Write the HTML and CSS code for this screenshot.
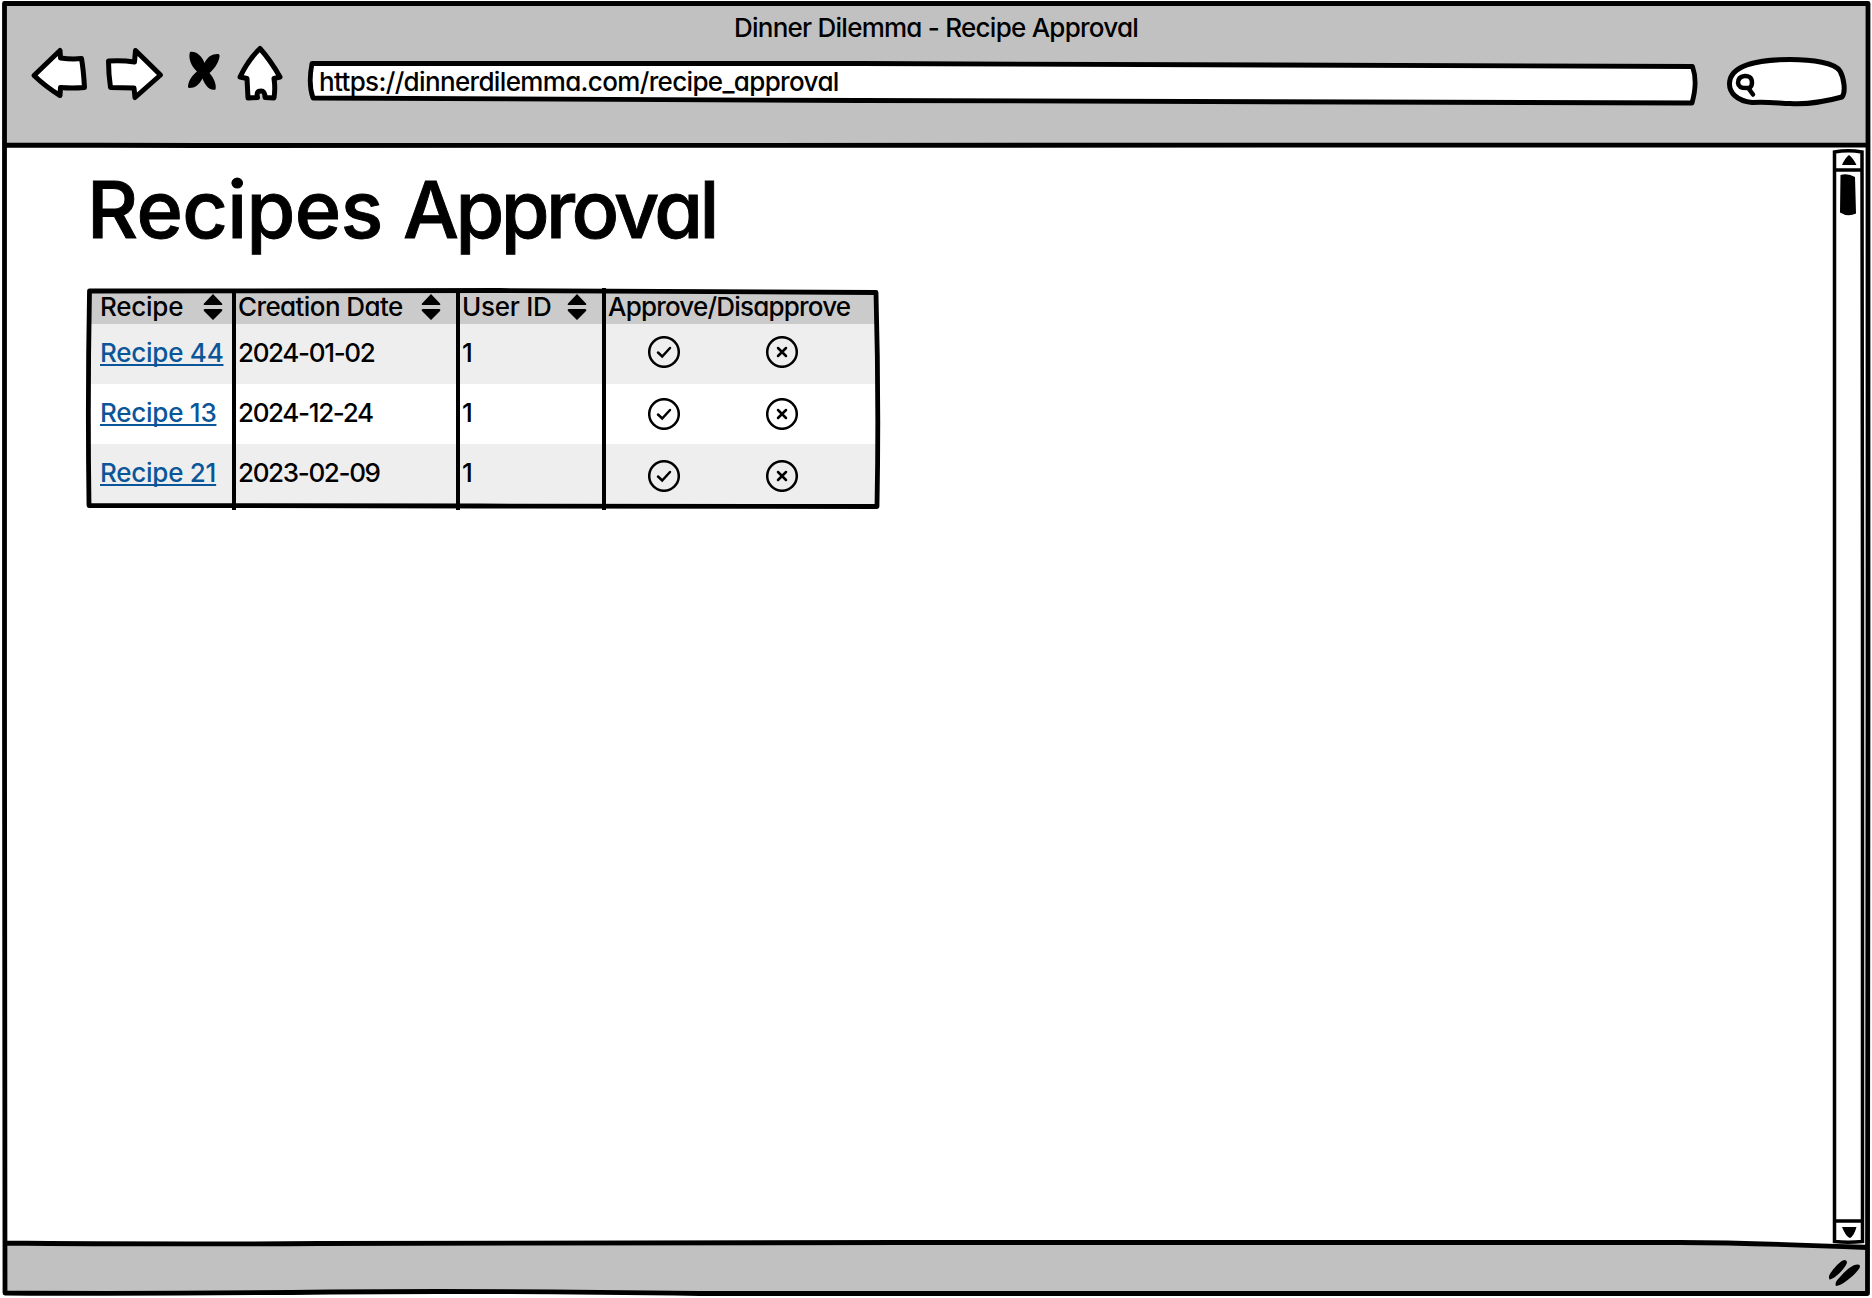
FILE: index.html
```html
<!DOCTYPE html>
<html lang="en">
<head>
<meta charset="utf-8">
<title>Dinner Dilemma - Recipe Approval</title>
<link rel="stylesheet" href="styles.css">
</head>
<body>
<div class="window">
  <header class="chrome">
    <div class="window-title">Dinner Dilemma - Recipe Approval</div>
    <div class="toolbar">
      <svg class="nav-icon" viewBox="30 44 60 58" width="60" height="58"><path d="M34 75.500L60 50.500L60.500 58Q72 59.500 81.500 58.500Q83.500 70 84.500 87.500Q72 88.500 60.500 87.500L60 95.500Q46 87 34 75.500Z"/></svg>
      <svg class="nav-icon nav-forward" viewBox="102 44 64 58" width="64" height="58"><path d="M108.500 61Q122 60 134.500 62L135.500 50.500L160.500 75L135 97.500L134 88L110.500 87.500Q108.500 74 108.500 61Z"/></svg>
      <svg class="nav-icon nav-stop" viewBox="184 44 40 58" width="40" height="58"><path class="solid" d="M190 52C196 51 202 56 204.500 63C208 56 213 53.500 218.500 54Q220 54.500 219.500 57C218 64 214 69 209.500 73C213 77 217 84 215.500 89.500C209 91 205 85 202.500 78.500C199 85 195 88 189.500 88Q187.500 88 188 86C189 79 193 75 197 71.500C191 66 188 58 190 52Z"/></svg>
      <svg class="nav-icon nav-home" viewBox="234 44 52 58" width="52" height="58"><path d="M260 48.500Q271 61 280 77L274 78.500Q275.500 88 274 98L265 97.500Q265 90.500 260.500 91Q256 91 257.500 97.500L248 98L247 78.500L240 77Q248 60 260 48.500Z"/></svg>
      <div class="address">
        <svg class="outline" viewBox="304 58 1396 50" preserveAspectRatio="none"><path d="M312 63.500L860 63.500L1692.500 66.500Q1698 82 1692 103L860 100.500L313 98Q308 84 312 63.500Z"/></svg>
        <span>https://dinnerdilemma.com/recipe_approval</span>
      </div>
      <svg class="search" viewBox="1724 54 126 56" width="126" height="56"><path d="M1752 102.500C1736 101 1729.500 92 1729.500 84C1729.500 66 1756 59.500 1790 59.500C1813 59.500 1835 63 1840 71C1844 78 1846 92 1842 97C1820 103 1805 104.500 1790 103.500C1777 103 1765 101.500 1752 102.500Z"/><path class="glass" d="M1752 82.500C1752 77 1748 75.500 1744.500 76C1740 76.500 1738 79.500 1738 83C1738.500 87.500 1742 88.500 1749 88Q1752 87 1752 82.500M1749 89L1753 94.500"/></svg>
    </div>
  </header>

  <div class="viewport">
    <main class="page">
      <h1>Recipes <span>Approval</span></h1>
      <div class="table-wrap">
        <table>
          <thead>
            <tr>
              <th><div class="head">Recipe<svg class="sort" viewBox="0 0 20 28"><path d="M10 1L19 10.500Q20 12 18 12H2Q0 12 1 10.500ZM10 27L19 18Q20 16 18 16H2Q0 16 1 18Z"/></svg></div></th>
              <th><div class="head head-date">Creation Date<svg class="sort" viewBox="0 0 20 28"><path d="M10 1L19 10.500Q20 12 18 12H2Q0 12 1 10.500ZM10 27L19 18Q20 16 18 16H2Q0 16 1 18Z"/></svg></div></th>
              <th><div class="head">User ID<svg class="sort" viewBox="0 0 20 28"><path d="M10 1L19 10.500Q20 12 18 12H2Q0 12 1 10.500ZM10 27L19 18Q20 16 18 16H2Q0 16 1 18Z"/></svg></div></th>
              <th><div class="head head-approve">Approve/Disapprove</div></th>
            </tr>
          </thead>
          <tbody>
            <tr>
              <td><a href="#">Recipe 44</a></td><td class="date">2024-01-02</td><td>1</td>
              <td><div class="actions actions-first"><svg viewBox="0 0 32 32"><circle cx="16" cy="16" r="14.800"/><path d="M10 16.500L14.200 20.500L22 12"/></svg><svg viewBox="0 0 32 32"><circle cx="16" cy="16" r="14.800"/><path d="M12 12L20 20M20 12L12 20"/></svg></div></td>
            </tr>
            <tr>
              <td><a href="#">Recipe 13</a></td><td class="date">2024-12-24</td><td>1</td>
              <td><div class="actions"><svg viewBox="0 0 32 32"><circle cx="16" cy="16" r="14.800"/><path d="M10 16.500L14.200 20.500L22 12"/></svg><svg viewBox="0 0 32 32"><circle cx="16" cy="16" r="14.800"/><path d="M12 12L20 20M20 12L12 20"/></svg></div></td>
            </tr>
            <tr>
              <td><a href="#">Recipe 21</a></td><td class="date">2023-02-09</td><td>1</td>
              <td><div class="actions actions-last"><svg viewBox="0 0 32 32"><circle cx="16" cy="16" r="14.800"/><path d="M10 16.500L14.200 20.500L22 12"/></svg><svg viewBox="0 0 32 32"><circle cx="16" cy="16" r="14.800"/><path d="M12 12L20 20M20 12L12 20"/></svg></div></td>
            </tr>
          </tbody>
        </table>
        <svg class="outline" viewBox="84 284 800 228"><path d="M89.500 291L500 290.500L876 292.500Q879 400 877 506.500L480 506L89 505.500Q87.500 400 89.500 291Z"/><path class="rule" d="M234 290V510M458 290V510M604 288V510"/></svg>
      </div>
    </main>
    <svg class="scrollbar" viewBox="1830 146 36 1100" width="36" height="1100"><path d="M1834.500 152Q1848 149.500 1862 152L1862.500 600V1241.500Q1848 1243 1834.500 1241.500V600ZM1834.500 170H1863M1834.500 1221H1862"/><path class="solid" d="M1849 155Q1853 158 1856.500 165H1842Q1845 158 1849 155ZM1840.500 175Q1848 173 1855 177L1856 213.500Q1848 217.500 1840 212.500ZM1842 1227H1856.500Q1854 1236 1850 1238Q1846 1237 1842 1227Z"/></svg>
  </div>

  <footer class="statusbar">
    <svg viewBox="1826 1256 38 34" width="38" height="34"><path d="M1829.500 1279.500C1828 1277 1829.500 1274 1832 1271C1836 1266 1841 1260 1845 1260Q1848 1261 1846.500 1264C1843 1271 1834 1279 1829.500 1279.500ZM1836 1286C1834.500 1283 1837 1280 1840 1277C1846 1270 1853 1264 1858 1264.500Q1861 1265 1859.500 1268C1855 1275 1842 1286 1836 1286Z"/></svg>
  </footer>

  <svg class="frame" viewBox="0 0 1872 1298"><path d="M4.500 3.500H1868V700L1867.500 1293.500H700Q480 1290.500 330 1292Q150 1294 5 1293L4.500 700ZM5 145L200 145.500L1867 145M5 1243Q150 1244.500 320 1243.500Q600 1242 900 1242.500L1680 1242.500Q1760 1243 1867 1247.500"/></svg>
</div>
</body>
</html>
```
FILE: styles.css
```css
* {
  box-sizing: border-box;
}

body {
  margin: 0;
  background: #fff;
  color: #000;
  font-family: Inter, "Noto Sans", sans-serif;
  font-size: 26px;
  font-weight: 500;
  line-height: 32px;
  letter-spacing: -0.250px;
  font-feature-settings: "cv11", "calt" 0;
}

svg {
  display: block;
  flex: none;
}

.window {
  position: relative;
  display: flex;
  flex-direction: column;
  width: 1872px;
  height: 1298px;
  overflow: hidden;
}

.frame {
  position: absolute;
  inset: 0;
  fill: none;
  stroke: #000;
  stroke-width: 4.800;
  stroke-linejoin: round;
  pointer-events: none;
}

.chrome {
  height: 143px;
  margin: 3px 4px 0;
  padding-top: 9px;
  background: #c1c1c1;
}

.window-title {
  height: 32px;
  text-align: center;
  letter-spacing: -0.750px;
  white-space: nowrap;
}

.toolbar {
  display: flex;
  align-items: flex-start;
  padding-left: 26px;
}

.nav-icon,
.search {
  fill: #fff;
  stroke: #000;
  stroke-width: 5;
  stroke-linejoin: round;
  stroke-linecap: round;
}

.nav-icon .solid {
  fill: #000;
  stroke: none;
}

.nav-forward { margin-left: 12px; }
.nav-stop { margin-left: 18px; }
.nav-home { margin-left: 10px; }

.address {
  position: relative;
  width: 1396px;
  height: 50px;
  margin: 14px 0 0 18px;
  padding: 8px 0 0 15px;
  letter-spacing: -0.650px;
  white-space: nowrap;
}

.address span {
  position: relative;
}

.outline {
  position: absolute;
  inset: 0;
  width: 100%;
  height: 100%;
  fill: none;
  stroke: #000;
  stroke-width: 4.800;
  stroke-linejoin: round;
}

.address .outline {
  fill: #fff;
}

.search {
  margin: 10px 0 0 24px;
}

.search .glass {
  stroke-width: 4.500;
}

.viewport {
  display: flex;
  justify-content: space-between;
  height: 1100px;
}

.page {
  padding: 15px 0 0 84px;
}

h1 {
  height: 123px;
  margin: 0;
  padding-left: 3px;
  font-size: 79px;
  font-weight: 500;
  line-height: 96px;
  letter-spacing: -0.600px;
  white-space: nowrap;
  -webkit-text-stroke: 0.900px #000;
}

h1 span {
  letter-spacing: -3.600px;
}

.table-wrap {
  position: relative;
  width: 800px;
  height: 228px;
  padding: 6px 0 0 5px;
}

table {
  table-layout: fixed;
  width: 788px;
  border-collapse: collapse;
}

th,
td {
  padding: 0 0 0 4px;
  text-align: left;
  font-weight: inherit;
  white-space: nowrap;
}

th { height: 34px; background: #cbcbcb; }
td { height: 60px; padding-bottom: 2px; }
tbody tr:nth-child(odd) { background: #eee; }

th:nth-child(1) { width: 145px; }
th:nth-child(2) { width: 224px; }
th:nth-child(3) { width: 146px; }

th:first-child,
td:first-child { padding-left: 11px; }

.date { letter-spacing: -1.350px; }
.head-date { letter-spacing: -0.600px; }
.head-approve { letter-spacing: -0.800px; }

.head {
  display: flex;
  align-items: center;
  justify-content: space-between;
  padding-right: 17px;
}

th:first-child .head {
  padding-right: 11px;
}

.sort {
  width: 20px;
  height: 28px;
}

a {
  color: #0a5699;
  text-decoration: underline;
  text-decoration-thickness: 1.500px;
  text-underline-offset: 2px;
  text-decoration-skip-ink: none;
}

.actions {
  display: flex;
  gap: 86px;
  padding: 2px 0 0 40px;
}

.actions-first { padding: 0 0 2px 40px; }
.actions-last { padding-top: 6px; }

.actions svg {
  width: 32px;
  height: 32px;
  fill: none;
  stroke: #000;
  stroke-width: 2.500;
  stroke-linecap: round;
}

.outline .rule {
  stroke-width: 4;
}

.scrollbar {
  margin-right: 6px;
  fill: none;
  stroke: #000;
  stroke-width: 3.500;
}

.scrollbar .solid {
  fill: #000;
  stroke: none;
}

.statusbar {
  display: flex;
  justify-content: flex-end;
  height: 48px;
  margin: -2px 4px 0;
  padding: 12px 4px 0 0;
  background: #c1c1c1;
}
```
